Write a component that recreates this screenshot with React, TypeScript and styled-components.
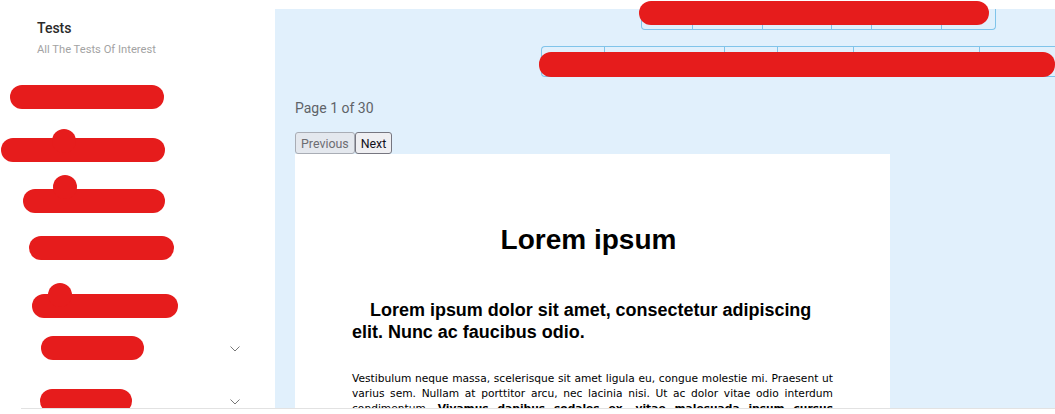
import React from 'react'
import styled, { createGlobalStyle } from 'styled-components'

const GlobalStyle = createGlobalStyle`
  html, body {
    margin: 0;
    padding: 0;
    height: 100%;
    overflow: hidden;
    background: #fff;
  }
`

const columnsTop = [51, 70, 69, 40, 70, 54]
const columnsBottom = [63, 120, 53, 76, 126, 80]

const sideItems = [
  { left: 10, width: 154, top: 29, bump: 0, rise: 0 },
  { left: 1, width: 164, top: 29, bump: 51, rise: 9 },
  { left: 23, width: 142, top: 27, bump: 30, rise: 14 },
  { left: 29, width: 145, top: 23, bump: 0, rise: 0 },
  { left: 32, width: 146, top: 34, bump: 16, rise: 11 },
]

const App = () => {
  return (
    <Page>
      <GlobalStyle />
      <Shell>
        <Sidebar>
          <SideHead>
            <SideTitle>Tests</SideTitle>
            <SideSub>All The Tests Of Interest</SideSub>
          </SideHead>
          <Menu>
            {sideItems.map((item, i) => (
              <MenuRow key={i} $top={item.top} $left={item.left}>
                <Scribble $width={item.width} $bump={item.bump} $rise={item.rise} />
              </MenuRow>
            ))}
            <DropRow $top={18} $left={41}>
              <Scribble $width={103} $bump={0} $rise={0} />
              <Chevron />
            </DropRow>
            <DropRow $top={29} $left={40}>
              <Scribble $width={92} $bump={0} $rise={0} />
              <Chevron />
            </DropRow>
          </Menu>
        </Sidebar>
        <Main>
          <TableTop>
            <Cells>
              {columnsTop.map((w, i) => <Cell key={i} $width={w} />)}
            </Cells>
            <CoverTop />
          </TableTop>
          <TableBottom>
            <Cells>
              {columnsBottom.map((w, i) => <Cell key={i} $width={w} />)}
            </Cells>
            <CoverBottom />
          </TableBottom>
          <PageInfo>Page 1 of 30</PageInfo>
          <Pager>
            <PagerButton disabled>Previous</PagerButton>
            <PagerButton>Next</PagerButton>
          </Pager>
          <Sheet>
            <SheetTitle>Lorem ipsum</SheetTitle>
            <SheetLead>Lorem ipsum dolor sit amet, consectetur adipiscing elit. Nunc ac faucibus odio.</SheetLead>
            <SheetText>
              Vestibulum neque massa, scelerisque sit amet ligula eu, congue molestie mi. Praesent ut varius sem. Nullam at porttitor arcu, nec lacinia nisi. Ut ac dolor vitae odio interdum condimentum. <b>Vivamus dapibus sodales ex, vitae malesuada ipsum cursus</b>
            </SheetText>
          </Sheet>
        </Main>
      </Shell>
      <BottomLine />
    </Page>
  )
}

const Chevron = () => (
  <ChevronIcon width="10" height="6" viewBox="0 0 10 6" fill="none">
    <path d="M0.5 0.5L5 5L9.5 0.5" stroke="#555" strokeWidth="0.8" />
  </ChevronIcon>
)

export default App

const Page = styled.div`
  display: flex;
  flex-direction: column;
  width: 1055px;
  height: 414px;
  overflow: hidden;
  background: #fff;
  font-family: Roboto, sans-serif;
`
const Shell = styled.div`
  display: flex;
  height: 408px;
  flex-shrink: 0;
  overflow: hidden;
`
const Sidebar = styled.div`
  width: 275px;
  flex-shrink: 0;
`
const SideHead = styled.div`
  padding: 20px 0 0 37px;
`
const SideTitle = styled.div`
  font-size: 14px;
  line-height: 17px;
  font-weight: 500;
  color: #2b2b2b;
`
const SideSub = styled.div`
  margin-top: 6px;
  font-size: 11.2px;
  line-height: 13px;
  font-weight: 400;
  color: #a3a3a3;
`
const Menu = styled.div`
  display: flex;
  flex-direction: column;
`
const MenuRow = styled.div<{ $top: number; $left: number }>`
  display: flex;
  align-items: center;
  margin-top: ${p => p.$top}px;
  padding-left: ${p => p.$left}px;
`
const DropRow = styled(MenuRow)`
  justify-content: space-between;
  padding-right: 35px;
`
const Scribble = styled.div<{ $width: number; $bump: number; $rise: number }>`
  position: relative;
  width: ${p => p.$width}px;
  height: 24px;
  border-radius: 12px;
  background: #e61c1c;
  &::before {
    content: '';
    display: ${p => (p.$bump ? 'block' : 'none')};
    position: absolute;
    left: ${p => p.$bump}px;
    top: -${p => p.$rise}px;
    width: 24px;
    height: 24px;
    border-radius: 50%;
    background: #e61c1c;
  }
`
const ChevronIcon = styled.svg`
  display: block;
  margin-top: 2px;
`
const Main = styled.div`
  flex: 1;
  display: flex;
  flex-direction: column;
  margin-top: 9px;
  padding-left: 20px;
  background: #e1f0fc;
  min-width: 0;
`
const TableTop = styled.div`
  position: relative;
  flex-shrink: 0;
  width: 355px;
  height: 21px;
  margin-left: 346px;
  box-sizing: border-box;
  border: 1px solid #80c4ea;
  border-top: none;
  border-radius: 0 0 4px 4px;
`
const TableBottom = styled.div`
  position: relative;
  flex-shrink: 0;
  width: 520px;
  height: 31px;
  margin: 16px 0 0 246px;
  box-sizing: border-box;
  border: 1px solid #80c4ea;
  border-right: none;
  border-radius: 4px 0 0 4px;
`
const Cells = styled.div`
  display: flex;
  height: 100%;
`
const Cell = styled.div<{ $width: number }>`
  width: ${p => p.$width}px;
  flex-shrink: 0;
  box-sizing: border-box;
  border-right: 1px solid #80c4ea;
  &:last-child {
    border-right: none;
  }
`
const CoverTop = styled.div`
  position: absolute;
  left: -3px;
  top: -8px;
  width: 350px;
  height: 24px;
  border-radius: 12px;
  background: #e61c1c;
`
const CoverBottom = styled.div`
  position: absolute;
  left: -3px;
  top: 5px;
  width: 516px;
  height: 25px;
  border-radius: 12px;
  background: #e61c1c;
`
const PageInfo = styled.div`
  margin-top: 23px;
  font-size: 14px;
  line-height: 17px;
  color: #5f6368;
`
const Pager = styled.div`
  display: flex;
  flex-shrink: 0;
  margin-top: 15px;
`
const PagerButton = styled.button`
  height: 22px;
  padding: 1px 5px 0;
  box-sizing: border-box;
  font-family: Roboto, sans-serif;
  font-size: 12.4px;
  color: #10101a;
  background: #efeff2;
  border: 1px solid #767680;
  border-radius: 3px;
  &:disabled {
    color: #6d6d72;
    background: #e4e8ee;
    border-color: #a9adb5;
  }
`
const Sheet = styled.div`
  flex: 1;
  width: 595px;
  padding: 0 57px;
  box-sizing: border-box;
  background: #fff;
  color: #000;
`
const SheetTitle = styled.h1`
  margin: 0;
  padding: 69px 8px 0 0;
  font-family: "Liberation Sans", sans-serif;
  font-size: 28px;
  line-height: 34px;
  font-weight: 700;
  text-align: center;
`
const SheetLead = styled.h2`
  margin: 42px 0 0;
  font-family: "Liberation Sans", sans-serif;
  font-size: 17.98px;
  line-height: 22px;
  font-weight: 700;
  text-indent: 18px;
`
const SheetText = styled.p`
  margin: 28px 0 0;
  font-family: "DejaVu Sans", sans-serif;
  font-size: 10.67px;
  line-height: 15px;
  text-align: justify;
  text-align-last: justify;
`
const BottomLine = styled.div`
  height: 1px;
  margin-left: 21px;
  flex-shrink: 0;
  background: #e2e2e2;
`
